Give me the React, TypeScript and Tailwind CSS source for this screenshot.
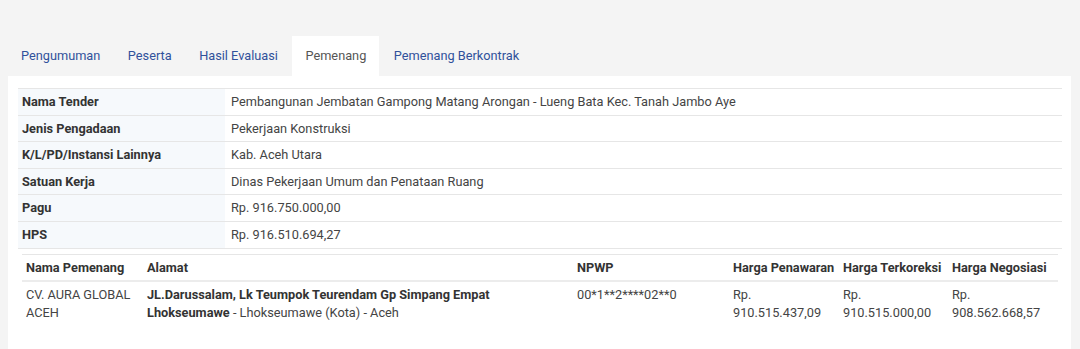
import React from "react";

const rows: [string, string][] = [
  ["Nama Tender", "Pembangunan Jembatan Gampong Matang Arongan - Lueng Bata Kec. Tanah Jambo Aye"],
  ["Jenis Pengadaan", "Pekerjaan Konstruksi"],
  ["K/L/PD/Instansi Lainnya", "Kab. Aceh Utara"],
  ["Satuan Kerja", "Dinas Pekerjaan Umum dan Penataan Ruang"],
  ["Pagu", "Rp. 916.750.000,00"],
  ["HPS", "Rp. 916.510.694,27"],
];

const tabs = ["Pengumuman", "Peserta", "Hasil Evaluasi", "Pemenang", "Pemenang Berkontrak"];

export default function App() {
  return (
    <div
      className="w-[1080px] h-[349px] bg-[#f4f4f4] overflow-hidden text-[12.75px] leading-[17.6px] text-[#333]"
      style={{ fontFamily: "Roboto, 'Open Sans', Arial, sans-serif" }}
    >
      <div className="pt-[36px] px-[8px]">
        <ul className="flex h-[40px]">
          {tabs.map((t) => (
            <li
              key={t}
              className={
                "mr-[1.5px] px-[13px] flex items-center " +
                (t === "Pemenang" ? "bg-white text-[#555]" : "text-[#30519b]")
              }
            >
              {t}
            </li>
          ))}
        </ul>
        <div className="bg-white h-[300px] w-[1063px] pt-[12px] px-[10px]">
          <table className="w-[1044px] border-collapse">
            <tbody>
              {rows.map(([k, v]) => (
                <tr key={k} className="border-t border-[#e6e6e6]">
                  <td className="w-[207px] bg-[#f6f9fc] font-bold px-[4px] py-[4px] align-top">{k}</td>
                  <td className="px-[6px] py-[4px] text-[#444] align-top">{v}</td>
                </tr>
              ))}
              <tr className="border-t border-[#e6e6e6]">
                <td colSpan={2} className="pt-[5px] px-[4px]">
                  <table className="w-[1036px] border-collapse table-fixed">
                    <colgroup>
                      <col className="w-[121px]" />
                      <col className="w-[430px]" />
                      <col className="w-[156px]" />
                      <col className="w-[110px]" />
                      <col className="w-[109px]" />
                      <col className="w-[110px]" />
                    </colgroup>
                    <thead>
                      <tr className="border-t border-[#e6e6e6] border-b-2 border-b-[#ececec]">
                        {["Nama Pemenang", "Alamat", "NPWP", "Harga Penawaran", "Harga Terkoreksi", "Harga Negosiasi"].map(
                          (h) => (
                            <th key={h} className="text-left font-bold px-[4px] py-[4px] whitespace-nowrap">
                              {h}
                            </th>
                          )
                        )}
                      </tr>
                    </thead>
                    <tbody>
                      <tr className="text-[#444]">
                        <td className="px-[4px] py-[4px] align-top">CV. AURA GLOBAL ACEH</td>
                        <td className="px-[4px] py-[4px] align-top">
                          <b className="text-[#333]">JL.Darussalam, Lk Teumpok Teurendam Gp Simpang Empat Lhokseumawe</b> -
                          Lhokseumawe (Kota) - Aceh
                        </td>
                        <td className="px-[4px] py-[4px] align-top">00*1**2****02**0</td>
                        <td className="px-[4px] py-[4px] align-top">Rp. 910.515.437,09</td>
                        <td className="px-[4px] py-[4px] align-top">Rp. 910.515.000,00</td>
                        <td className="px-[4px] py-[4px] align-top">Rp. 908.562.668,57</td>
                      </tr>
                    </tbody>
                  </table>
                </td>
              </tr>
            </tbody>
          </table>
        </div>
      </div>
    </div>
  );
}
